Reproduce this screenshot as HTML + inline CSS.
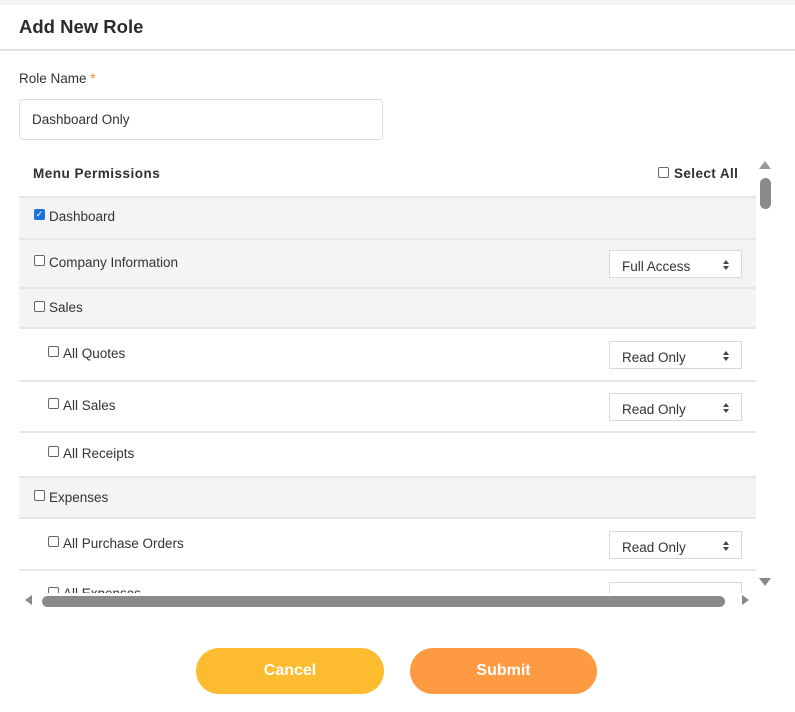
<!DOCTYPE html>
<html><head><style>
*{box-sizing:border-box;margin:0;padding:0}
body{width:795px;height:712px;background:#fff;font-family:"Liberation Sans",sans-serif;color:#333;position:relative;overflow:hidden}
.a{position:absolute}
.cb{position:absolute;width:11px;height:11px;border:1px solid #666;border-radius:2px;background:#fff}
.lbl{position:absolute;font-size:13.5px;color:#333}
.sel{position:absolute;left:609px;width:133px;height:28px;border:1px solid #d8d8d8;background:#fff;font-size:13.5px;padding:8px 0 0 12px;color:#333}
.sel:after{content:"";position:absolute;right:12px;top:9px;border:3.5px solid transparent;border-bottom:4px solid #444;border-top:0}
.sel:before{content:"";position:absolute;right:12px;top:15px;border:3.5px solid transparent;border-top:4px solid #444;border-bottom:0}
.gray{background:#f4f4f4}
.line{position:absolute;left:19px;width:737px;height:2px;background:#e6e6e6}
</style></head><body>
<div class="a" style="left:0;top:0;width:795px;height:5px;background:#f3f3f3"></div>
<div class="a" style="left:19px;top:16px;font-size:18.5px;font-weight:bold;color:#2b2b2b">Add New Role</div>
<div class="a" style="left:0;top:49px;width:795px;height:2px;background:#e4e4e4"></div>
<div class="a" style="left:19px;top:71px;font-size:13.5px;color:#333">Role Name <span style="color:#f08a24">*</span></div>
<div class="a" style="left:19px;top:99px;width:364px;height:41px;border:1px solid #ddd;border-radius:4px;font-size:13.5px;padding:12px 0 0 12px">Dashboard Only</div>

<div class="a" style="left:33px;top:166px;font-size:13.5px;font-weight:bold;letter-spacing:.5px;color:#2f2f2f">Menu Permissions</div>
<div class="cb" style="left:658px;top:167px"></div>
<div class="a" style="left:674px;top:166px;font-size:13.5px;font-weight:bold;letter-spacing:.4px;color:#2f2f2f">Select All</div>

<div class="line" style="top:196px"></div>
<div class="a gray" style="left:19px;top:198px;width:737px;height:40px"></div>
<div class="a" style="left:34px;top:209px;width:11px;height:11px;background:#1a73d9;border-radius:2px;color:#fff;font-size:9px;line-height:11px;text-align:center">✓</div>
<div class="lbl" style="left:49px;top:209px">Dashboard</div>
<div class="line" style="top:238px"></div>
<div class="a gray" style="left:19px;top:240px;width:737px;height:48px"></div>
<div class="cb" style="left:34px;top:255px"></div>
<div class="lbl" style="left:49px;top:255px">Company Information</div>
<div class="sel" style="top:250px">Full Access</div>
<div class="line" style="top:287px"></div>
<div class="a gray" style="left:19px;top:289px;width:737px;height:38px"></div>
<div class="cb" style="left:34px;top:301px"></div>
<div class="lbl" style="left:49px;top:300px">Sales</div>
<div class="line" style="top:327px"></div>
<div class="cb" style="left:48px;top:346px"></div>
<div class="lbl" style="left:63px;top:346px">All Quotes</div>
<div class="sel" style="top:341px">Read Only</div>
<div class="line" style="top:380px"></div>
<div class="cb" style="left:48px;top:398px"></div>
<div class="lbl" style="left:63px;top:398px">All Sales</div>
<div class="sel" style="top:393px">Read Only</div>
<div class="line" style="top:431px"></div>
<div class="cb" style="left:48px;top:446px"></div>
<div class="lbl" style="left:63px;top:446px">All Receipts</div>
<div class="line" style="top:476px"></div>
<div class="a gray" style="left:19px;top:478px;width:737px;height:39px"></div>
<div class="cb" style="left:34px;top:490px"></div>
<div class="lbl" style="left:49px;top:490px">Expenses</div>
<div class="line" style="top:517px"></div>
<div class="cb" style="left:48px;top:536px"></div>
<div class="lbl" style="left:63px;top:536px">All Purchase Orders</div>
<div class="sel" style="top:531px">Read Only</div>
<div class="line" style="top:569px"></div>
<div class="a" style="left:19px;top:582px;width:740px;height:11px;overflow:hidden">
 <div class="cb" style="left:29px;top:5px"></div>
 <div class="lbl" style="left:44px;top:4px">All Expenses</div>
 <div class="a" style="left:590px;top:0;width:133px;height:28px;border:1px solid #d8d8d8"></div>
</div>
<div class="a" style="left:19px;top:593px;width:740px;height:17px;background:#fff"></div>
<div class="a" style="left:759px;top:161px;border:6px solid transparent;border-bottom:8px solid #999;border-top:0"></div>
<div class="a" style="left:760px;top:178px;width:11px;height:31px;background:#8a8a8a;border-radius:6px"></div>
<div class="a" style="left:759px;top:578px;border:6px solid transparent;border-top:8px solid #888;border-bottom:0"></div>
<div class="a" style="left:25px;top:595px;border:5px solid transparent;border-right:7px solid #888;border-left:0"></div>
<div class="a" style="left:42px;top:596px;width:683px;height:11px;background:#8a8a8a;border-radius:6px"></div>
<div class="a" style="left:742px;top:595px;border:5px solid transparent;border-left:7px solid #888;border-right:0"></div>

<div class="a" style="left:196px;top:648px;width:188px;height:46px;border-radius:23px;background:#fdbb2f;color:#fff;font-weight:bold;font-size:16px;text-align:center;line-height:46px">Cancel</div>
<div class="a" style="left:410px;top:648px;width:187px;height:46px;border-radius:23px;background:#fe9a42;color:#fff;font-weight:bold;font-size:16px;text-align:center;line-height:46px">Submit</div>
</body></html>
